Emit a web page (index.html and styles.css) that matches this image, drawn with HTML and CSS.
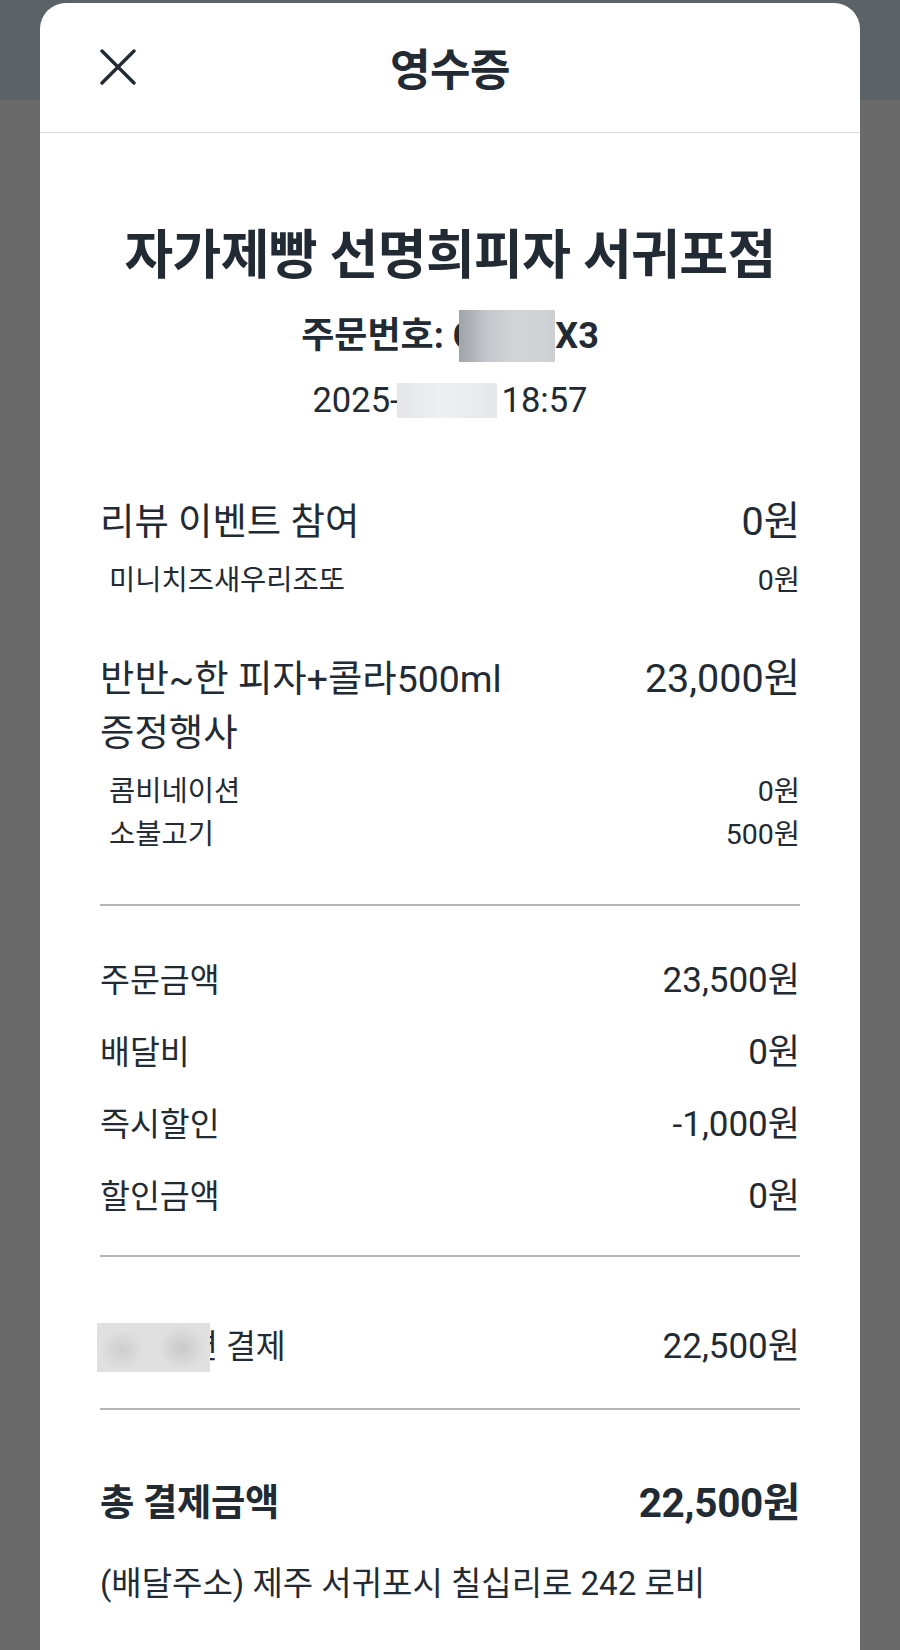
FILE: index.html
```html
<!DOCTYPE html>
<html lang="ko">
<head>
<meta charset="utf-8">
<title>영수증</title>
<link rel="stylesheet" href="styles.css">
</head>
<body>
<div class="sheet">
  <header class="header">
    <button class="close" aria-label="닫기">
      <svg width="36" height="36" viewBox="0 0 36 36"><path d="M2 2 L34 34 M34 2 L2 34" stroke="#222a33" stroke-width="3.4" stroke-linecap="round" fill="none"/></svg>
    </button>
    <h1 class="title">영수증</h1>
    <span></span>
  </header>

  <main class="content">
    <h2 class="store">자가제빵 선명희피자 서귀포점</h2>
    <div class="order"><span>주문번호: C</span><span class="redact redact-order"></span><span>X3</span></div>
    <div class="date"><span>2025-</span><span class="redact redact-date"></span><span>18:57</span></div>

    <section class="items">
      <div class="item">
        <div class="item-main"><span class="item-name">리뷰 이벤트 참여</span><span class="item-price">0원</span></div>
        <div class="opt"><span>미니치즈새우리조또</span><span>0원</span></div>
      </div>
      <div class="item">
        <div class="item-main"><span class="item-name">반반~한 피자+콜라500ml 증정행사</span><span class="item-price">23,000원</span></div>
        <div class="opt"><span>콤비네이션</span><span>0원</span></div>
        <div class="opt"><span>소불고기</span><span>500원</span></div>
      </div>
    </section>

    <div class="rule rule-1"></div>

    <section class="summary">
      <div class="row"><span>주문금액</span><span class="amt">23,500원</span></div>
      <div class="row"><span>배달비</span><span class="amt">0원</span></div>
      <div class="row"><span>즉시할인</span><span class="amt">-1,000원</span></div>
      <div class="row"><span>할인금액</span><span class="amt">0원</span></div>
    </section>

    <div class="rule rule-2"></div>

    <div class="row pay"><span class="pay-label"><span class="redact redact-pay"></span><span>편 결제</span></span><span class="amt">22,500원</span></div>

    <div class="rule rule-3"></div>

    <div class="total"><span>총 결제금액</span><span class="total-amt">22,500원</span></div>
    <p class="address">(배달주소) 제주 서귀포시 칠십리로 242 로비</p>
  </main>
</div>
</body>
</html>
```

FILE: styles.css
```css
* { box-sizing: border-box; }

html, body {
  margin: 0;
  padding: 0;
}

body {
  height: 1650px;
  overflow: hidden;
  background: linear-gradient(#5d6266 0, #5d6266 100px, #6a6a6a 100px, #6a6a6a 100%);
  font-family: Roboto, "Noto Sans CJK KR", sans-serif;
  color: #222a33;
}

.sheet {
  margin: 3px 40px 0;
  background: #ffffff;
  border-radius: 26px 26px 0 0;
  min-height: 1700px;
}

.header {
  height: 130px;
  display: grid;
  grid-template-columns: 1fr auto 1fr;
  align-items: center;
  padding: 0 60px;
  border-bottom: 1px solid #dcdcdc;
}

.close {
  width: 36px;
  height: 36px;
  padding: 0;
  border: 0;
  background: none;
  display: flex;
  margin-top: -2px;
}

.title {
  margin: 6px 0 0;
  font-size: 44px;
  font-weight: 700;
  line-height: 1;
  letter-spacing: -0.5px;
}

.content {
  padding: 0 60px;
}

.store {
  margin: 92px 0 0;
  font-size: 53px;
  font-weight: 700;
  line-height: 62px;
  text-align: center;
  letter-spacing: -0.6px;
  white-space: nowrap;
}

.order {
  margin-top: 23px;
  height: 52px;
  display: flex;
  justify-content: center;
  align-items: center;
  font-size: 36px;
  font-weight: 700;
  line-height: 52px;
  white-space: pre;
}

.date {
  margin-top: 16px;
  height: 44px;
  display: flex;
  justify-content: center;
  align-items: center;
  font-size: 34.5px;
  line-height: 44px;
}

.redact {
  display: inline-block;
  position: relative;
  flex: none;
}

.redact-order {
  width: 96px;
  height: 52px;
  margin-left: -17px;
  background: linear-gradient(90deg, #9fa4a9 0%, #c4c7cb 30%, #d3d5d8 60%, #cdd0d3 100%);
  filter: blur(0.7px);
}

.redact-date {
  width: 100px;
  height: 35px;
  margin: 0 5px 0 -3px;
  background: linear-gradient(90deg, #e5e6e8 0%, #eeeff0 45%, #e6e7e8 100%);
  filter: blur(0.6px);
}

.redact-pay {
  width: 113px;
  height: 49px;
  margin: 0 -22px 0 -3px;
  vertical-align: middle;
  background:
    radial-gradient(ellipse 22px 20px at 22% 55%, #cdcdcd, rgba(205,205,205,0)),
    radial-gradient(ellipse 24px 22px at 75% 50%, #c9c9c9, rgba(201,201,201,0)),
    #e0e0e0;
  filter: blur(0.6px);
}

.items {
  margin-top: 73px;
  display: flex;
  flex-direction: column;
  gap: 50px;
}

.item-main {
  display: flex;
  justify-content: space-between;
  align-items: flex-start;
  gap: 40px;
  font-size: 37.4px;
  line-height: 54px;
  margin-bottom: 10px;
}

.item-name {
  flex: 1;
  max-width: 470px;
  word-break: keep-all;
}

.item-price {
  font-size: 39.5px;
  white-space: nowrap;
}

.opt {
  display: flex;
  justify-content: space-between;
  padding-left: 9px;
  font-size: 28.5px;
  line-height: 43px;
}

.rule {
  height: 2px;
  background: #b3b6ba;
}

.rule-1 { margin-top: 48px; }
.rule-2 { margin-top: 36px; }
.rule-3 { margin-top: 36px; }

.summary {
  padding-top: 53px;
  display: flex;
  flex-direction: column;
  gap: 28px;
}

.row {
  display: flex;
  justify-content: space-between;
  align-items: center;
  font-size: 32.5px;
  line-height: 44px;
}

.amt {
  font-size: 35px;
  white-space: nowrap;
}

.pay {
  margin-top: 65px;
  height: 50px;
}

.pay-label {
  display: flex;
  align-items: center;
}

.total {
  margin-top: 68px;
  display: flex;
  justify-content: space-between;
  align-items: center;
  font-weight: 700;
  font-size: 37.3px;
  line-height: 50px;
  letter-spacing: -0.3px;
}

.total-amt {
  font-size: 40.5px;
}

.address {
  margin: 34px 0 0;
  font-size: 33px;
  line-height: 44px;
}
```
